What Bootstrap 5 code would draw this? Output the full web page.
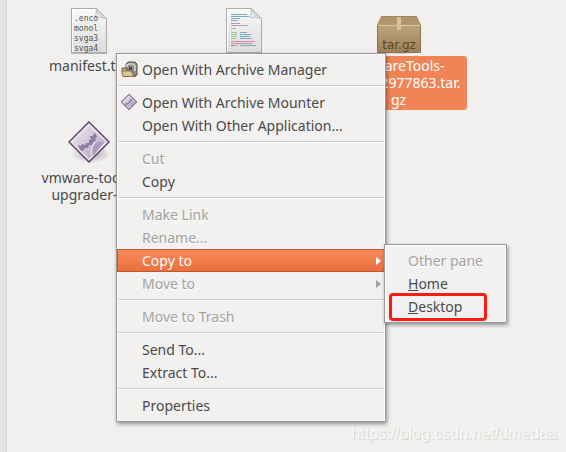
<!DOCTYPE html>
<html lang="en">
<head>
<meta charset="utf-8">
<meta name="viewport" content="width=device-width, initial-scale=1">
<title>Files</title>
<link href="https://cdn.jsdelivr.net/npm/bootstrap@5.3.0/dist/css/bootstrap.min.css" rel="stylesheet">
<style>
  body { background: #f1f0ee; color: #4a4a4a; font: 14px/17px "Noto Sans", "Open Sans", sans-serif; overflow: hidden; }
  .side-strip { width: 7px; background: #e6e4e2; border-right: 1px solid #d6d4d1; }
  .file-grid { display: grid; grid-template-columns: repeat(auto-fill, 155px); grid-auto-rows: 112px; padding: 8px 0 0 4px; }
  .file-icon { height: 46px; }
  .file-name { width: 136px; margin-top: 2px; padding: 1px 2px 2px; border-radius: 3px; overflow-wrap: break-word; }
  .file-name.selected { background: #f08457; color: #fff; }
  .ctx-menu { --bs-dropdown-font-size: 14px; min-width: 0; padding: 4px 0; line-height: 23px; color: #4a4a4a;
    background: #f2f1ef; border: 1px solid #9b9996; border-radius: 0;
    box-shadow: inset 1px 1px #fff, inset -1px 0 #fff, 1px 2px 4px rgba(0,0,0,.4); }
  .main-menu { left: 116px; top: 53px; width: 270px; }
  .sub-menu { left: 384px; top: 244px; width: 123px; }
  .ctx-menu .dropdown-item { height: 23px; padding: 0 4px 0 25px; color: #4a4a4a; line-height: 23px; position: relative; }
  .sub-menu .dropdown-item { padding-left: 23px; }
  .ctx-menu .dropdown-item:hover { background: none; }
  .ctx-menu .dropdown-item:disabled { color: #a3a19f; text-shadow: 0 1px #fff; }
  .ctx-menu .dropdown-item.open-item { background: linear-gradient(#f98b5e, #e96d3b); color: #fff; box-shadow: inset 0 0 0 1px #bd5730; }
  .ctx-menu .dropdown-divider { margin: 4px 1px; border-top: 1px solid #cfcdcb; border-bottom: 1px solid #fff; opacity: 1; }
  .item-icon { position: absolute; left: 4px; top: 3px; }
  .callout-box { left: 4px; right: 19px; bottom: 1px; height: 28px; border: 3px solid #fb1b12; border-radius: 4px; pointer-events: none; }
  .site-mark { right: 9px; bottom: 8px; font: 16px/20px "Liberation Sans", Arial, sans-serif; color: #f8f8f7; text-shadow: 1px 1px 1px #d2d1d0; }
</style>
</head>
<body>
<svg width="0" height="0" class="position-absolute" aria-hidden="true">
  <defs>
    <linearGradient id="paper" x2="0" y2="1"><stop stop-color="#f8f8f8"/><stop offset="1" stop-color="#dcdcdc"/></linearGradient>
    <linearGradient id="fold" x1="0" y1="1" x2="1" y2="0"><stop stop-color="#fff"/><stop offset="1" stop-color="#aaa"/></linearGradient>
    <linearGradient id="gem" x2="1" y2="1"><stop stop-color="#f4eff5"/><stop offset=".5" stop-color="#cfc6d6"/><stop offset="1" stop-color="#a595b3"/></linearGradient>
    <linearGradient id="carton" x2="0" y2="1"><stop stop-color="#c7af87"/><stop offset="1" stop-color="#9c8058"/></linearGradient>
    <radialGradient id="shade"><stop stop-color="#777" stop-opacity=".6"/><stop offset="1" stop-color="#777" stop-opacity="0"/></radialGradient>
    <symbol id="sheet" viewBox="0 0 36 46">
      <path d="M.5.5h25l10 10v34.500h-35z" fill="url(#paper)" stroke="#aaa"/>
      <path d="M1.500 44V1.500H25" fill="none" stroke="#fff"/>
      <path d="M25 .5q1 5-1 9 5-1 11.500 1z" fill="url(#fold)" stroke="#b5b5b5" stroke-width=".8"/>
      <path d="M0 45h36" stroke="#999"/>
    </symbol>
    <symbol id="diamond" viewBox="0 0 42 42">
      <path d="M21 1 41 21 21 41 1 21z" fill="url(#gem)" stroke="#65446f" stroke-width="1.500"/>
      <path d="M21 3.500 38.500 21 21 38.500 3.500 21z" fill="none" stroke="#eee6f0" stroke-width="1.500"/>
      <path d="M10 24l3 1 1-2 3 1 1-2 3 0 0-3 2-1-1-3 3 0 1-3 2 1 1 3-2 2 1 2-3 1-1 3-3 0-1 3-3 0-2 3-3-1z" fill="#8e7ca6"/>
      <path d="M25 34q-2-9 4-13l7 0-10 13z" fill="#ab9cbd"/><path d="M23 34q0-10 5-13" fill="none" stroke="#eee8f1"/>
    </symbol>
  </defs>
</svg>
<div class="d-flex min-vh-100">
  <aside class="side-strip flex-shrink-0"></aside>
  <main class="file-grid flex-grow-1" aria-label="Folder contents">
    <div class="d-flex flex-column align-items-center text-center">
      <div class="file-icon">
        <svg width="36" height="46" viewBox="0 0 36 46" aria-hidden="true"><use href="#sheet"/>
          <g font-family="DejaVu Sans Mono, monospace" font-size="8" fill="#555"><text x="3" y="13">.enco</text><text x="3" y="23">monol</text><text x="3" y="33">svga3</text><text x="3" y="43">svga4</text></g></svg>
      </div>
      <div class="file-name">manifest.txt</div>
    </div>
    <div class="d-flex flex-column align-items-center text-center">
      <div class="file-icon">
        <svg width="36" height="46" viewBox="0 0 36 46" aria-hidden="true"><use href="#sheet"/>
          <g fill="none" stroke-width="1">
            <path stroke="#7fa9c2" d="M5 6.500h16M5 8.500h18M5 10.500h9M5 12.500h7M14 24.500h7M14 26.500h11M14 28.500h10M14 30.500h12M14 37.500h16"/>
            <path stroke="#c389c0" d="M5 15.500h9M5 17.500h5"/><path stroke="#9fa9b4" d="M10 17.500h12M8 20.500h2M9 24.500h2M9 26.500h2M9 28.500h1M9 30.500h1M10 37.500h2"/>
            <path stroke="#8fd27f" d="M5 20.500h3M5 22.500h1M5 24.500h4M5 26.500h4M5 28.500h4M5 30.500h4"/>
            <path stroke="#cf8ba9" d="M5 33.500h24M5 35.500h21"/><path stroke="#d35d62" d="M5 37.500h4"/>
          </g></svg>
      </div>
    </div>
    <div class="d-flex flex-column align-items-center text-center">
      <div class="file-icon">
        <svg width="46" height="46" viewBox="0 0 46 46" aria-hidden="true">
          <ellipse cx="23" cy="40" rx="23" ry="9" fill="url(#shade)"/>
          <path d="M5.500 8.500h35l4 9v27h-43v-27z" fill="url(#carton)" stroke="#8d754f"/>
          <path d="M5.500 8.500h35l4 8h-43z" fill="#b0946a"/><path d="M2 17.500h42" stroke="#dac59e"/>
          <path d="M21 9h4v13h-4z" fill="#d2c2a6"/>
          <text x="23" y="41" text-anchor="middle" font-family="DejaVu Sans, sans-serif" font-size="12" fill="#5c4729">tar.gz</text></svg>
      </div>
      <div class="file-name selected">VMwareTools-10.0.0-2977863.tar.<wbr>gz</div>
    </div>
    <div class="d-flex flex-column align-items-center text-center">
      <div class="file-icon">
        <svg width="46" height="46" viewBox="0 0 46 46" aria-hidden="true"><ellipse cx="25" cy="34" rx="20" ry="9" fill="url(#shade)"/><use href="#diamond" x="2" y="1" width="42" height="42"/></svg>
      </div>
      <div class="file-name">vmware-tools-upgrader-1</div>
    </div>
  </main>
</div>

<ul class="dropdown-menu show ctx-menu main-menu">
  <li><button type="button" class="dropdown-item">
    <svg class="item-icon" width="17" height="17" viewBox="0 0 17 17" aria-hidden="true">
      <path d="M5 3 7 1h7l2 2v11l-3 1H5z" fill="#8b8d87" stroke="#555851"/><path d="M6 6V4l2-1h4l2 2v5" fill="none" stroke="#d8dad4" stroke-width="1.500"/><path d="M8 6h3v4H8z" fill="#4a4d48"/>
      <path d="M1 7h4l1 2h5v6H2z" fill="#b9a57a" stroke="#766238"/><path d="M.5 10h10l2 5.500H2z" fill="#d3c6a0" stroke="#8a7443"/><path d="M2 15.500h13" stroke="#a5731d"/></svg>Open With Archive Manager</button></li>
  <li><hr class="dropdown-divider"></li>
  <li><button type="button" class="dropdown-item"><svg class="item-icon" width="16" height="16" viewBox="0 0 42 42" aria-hidden="true"><use href="#diamond"/><path d="M21 1 41 21 21 41 1 21z" fill="none" stroke="#65446f" stroke-width="2"/></svg>Open With Archive Mounter</button></li>
  <li><button type="button" class="dropdown-item">Open With Other Application...</button></li>
  <li><hr class="dropdown-divider"></li>
  <li><button type="button" class="dropdown-item" disabled>Cut</button></li>
  <li><button type="button" class="dropdown-item">Copy</button></li>
  <li><hr class="dropdown-divider"></li>
  <li><button type="button" class="dropdown-item" disabled>Make Link</button></li>
  <li><button type="button" class="dropdown-item" disabled>Rename...</button></li>
  <li><button type="button" class="dropdown-item open-item d-flex align-items-center justify-content-between" aria-expanded="true">Copy to<svg width="5" height="8" viewBox="0 0 5 8" aria-hidden="true"><path d="M0 0 5 4 0 8z" fill="#fff"/></svg></button></li>
  <li><button type="button" class="dropdown-item d-flex align-items-center justify-content-between" disabled>Move to<svg width="5" height="8" viewBox="0 0 5 8" aria-hidden="true"><path d="M0 0 5 4 0 8z" fill="#a3a19f"/></svg></button></li>
  <li><hr class="dropdown-divider"></li>
  <li><button type="button" class="dropdown-item" disabled>Move to Trash</button></li>
  <li><hr class="dropdown-divider"></li>
  <li><button type="button" class="dropdown-item">Send To...</button></li>
  <li><button type="button" class="dropdown-item">Extract To...</button></li>
  <li><hr class="dropdown-divider"></li>
  <li><button type="button" class="dropdown-item">Properties</button></li>
</ul>

<ul class="dropdown-menu show ctx-menu sub-menu">
  <li><button type="button" class="dropdown-item" disabled>Other pane</button></li>
  <li><button type="button" class="dropdown-item"><u>H</u>ome</button></li>
  <li><button type="button" class="dropdown-item"><u>D</u>esktop</button></li>
  <li class="callout-box position-absolute" aria-hidden="true"></li>
</ul>
<div class="site-mark position-absolute">https://blog.csdn.net/dmedaa</div>
<script src="https://cdn.jsdelivr.net/npm/bootstrap@5.3.0/dist/js/bootstrap.bundle.min.js"></script>
</body>
</html>
